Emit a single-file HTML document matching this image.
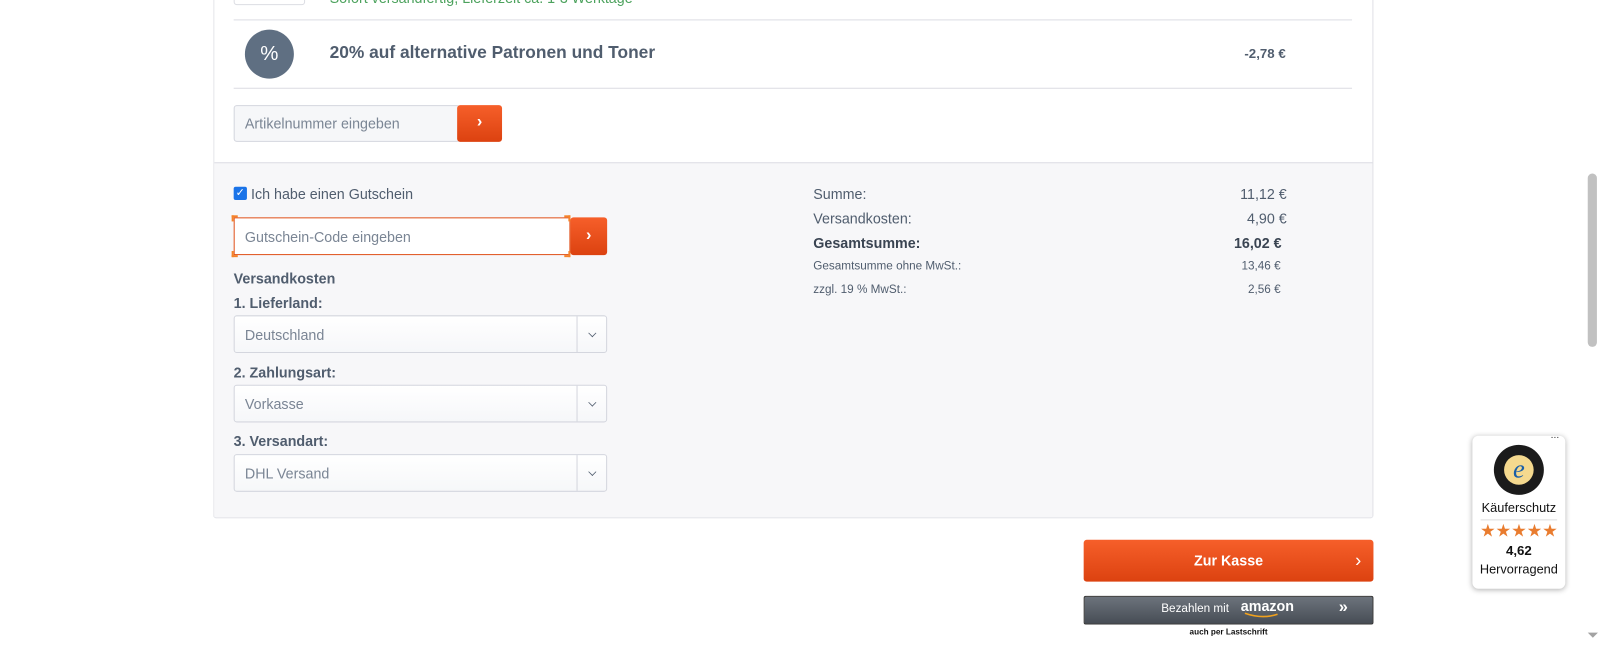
<!DOCTYPE html>
<html><head><meta charset="utf-8"><style>
*{box-sizing:border-box;margin:0;padding:0}
body{width:1600px;height:644px;overflow:hidden;background:#fff;font-family:"Liberation Sans",sans-serif;color:#505d6e;position:relative}
#w{position:absolute;left:0;top:0;width:1568px;height:632px;transform:scale(1.0204);transform-origin:0 0}
.abs{position:absolute}
.panel{left:209px;top:-5px;width:1137px;height:513px;border:1px solid #dcdde3;border-top:none;border-radius:0 0 3px 3px}
.line{height:1px;background:#dcdde3}
.btn{background:linear-gradient(#f65f2a,#dc4210);border-radius:3px;color:#fff;text-align:center;font-weight:bold}
.inp{border:1px solid #d4d6de;border-radius:3px;background:#fff;font-size:14px;color:#7a8594;padding-left:10px;display:flex;align-items:center}
.sel{left:229px;width:366px;height:37px;background:linear-gradient(#fff,#f6f7f9)}
.sel:after{content:"";position:absolute;right:0;top:0;width:28px;height:35px;border-left:1px solid #d4d6de}
.chev{position:absolute;right:10px;top:13px;width:7px;height:7px;border-right:1.5px solid #505d6e;border-bottom:1.5px solid #505d6e;transform:rotate(45deg) scale(.8)}
.lbl{font-size:14px;font-weight:bold;left:229px}
.sum{font-size:14px}
.r{text-align:right;width:200px}
</style></head><body><div id="w">
<div class="abs panel"></div>
<div class="abs" style="left:229px;top:-10px;width:70px;height:15px;border:1px solid #dcdde3;border-radius:3px"></div>
<div class="abs" style="left:323px;top:-10px;font-size:14px;color:#4ca25d">Sofort versandfertig, Lieferzeit ca. 1-3 Werktage</div>
<div class="abs line" style="left:229px;top:19px;width:1096px"></div>
<div class="abs" style="left:240px;top:29px;width:48px;height:48px;border-radius:50%;background:#5f6f82;color:#fff;font-size:20px;text-align:center;line-height:48px">%</div>
<div class="abs" style="left:323px;top:42px;font-size:17px;font-weight:bold">20% auf alternative Patronen und Toner</div>
<div class="abs" style="left:1160px;top:45px;width:100px;text-align:right;font-size:13px;font-weight:bold">-2,78 €</div>
<div class="abs line" style="left:229px;top:86px;width:1096px"></div>
<div class="abs inp" style="left:229px;top:103px;width:222px;height:36px;background:#f6f7f9">Artikelnummer eingeben</div>
<div class="abs btn" style="left:448px;top:103px;width:44px;height:36px;line-height:34px;font-size:16px">›</div>
<div class="abs" style="left:210px;top:159px;width:1135px;height:348px;background:#f7f7f9;border-top:1px solid #dcdde3"></div>
<div class="abs" style="left:229px;top:183px;width:13px;height:13px;background:#1a73e8;border-radius:2px;color:#fff;font-size:11px;line-height:13px;text-align:center">✓</div>
<div class="abs" style="left:246px;top:182px;font-size:14px">Ich habe einen Gutschein</div>
<div class="abs inp" style="left:229px;top:213px;width:330px;height:37px;border:1.5px solid #e0521c;border-radius:0">Gutschein-Code eingeben</div>
<div class="abs" style="left:227px;top:211px;width:6px;height:6px;border-left:2px solid #f5832a;border-top:2px solid #f5832a"></div>
<div class="abs" style="left:553px;top:211px;width:6px;height:6px;border-right:2px solid #f5832a;border-top:2px solid #f5832a"></div>
<div class="abs" style="left:227px;top:246px;width:6px;height:6px;border-left:2px solid #f5832a;border-bottom:2px solid #f5832a"></div>
<div class="abs" style="left:553px;top:246px;width:6px;height:6px;border-right:2px solid #f5832a;border-bottom:2px solid #f5832a"></div>
<div class="abs btn" style="left:559px;top:213px;width:36px;height:37px;line-height:35px;font-size:16px">›</div>
<div class="abs lbl" style="top:265px">Versandkosten</div>
<div class="abs lbl" style="top:289px">1. Lieferland:</div>
<div class="abs inp sel" style="top:309px">Deutschland<span class="chev"></span></div>
<div class="abs lbl" style="top:357px">2. Zahlungsart:</div>
<div class="abs inp sel" style="top:377px">Vorkasse<span class="chev"></span></div>
<div class="abs lbl" style="top:424px">3. Versandart:</div>
<div class="abs inp sel" style="top:445px">DHL Versand<span class="chev"></span></div>

<div class="abs sum" style="left:797px;top:182px">Summe:</div>
<div class="abs sum r" style="left:1061px;top:182px">11,12 €</div>
<div class="abs sum" style="left:797px;top:206px">Versandkosten:</div>
<div class="abs sum r" style="left:1061px;top:206px">4,90 €</div>
<div class="abs sum" style="left:797px;top:230px;font-weight:bold;color:#3a4452">Gesamtsumme:</div>
<div class="abs sum r" style="left:1056px;top:230px;font-weight:bold;color:#3a4452">16,02 €</div>
<div class="abs" style="left:797px;top:255px;font-size:11.5px">Gesamtsumme ohne MwSt.:</div>
<div class="abs r" style="left:1055px;top:255px;font-size:11.5px">13,46 €</div>
<div class="abs" style="left:797px;top:278px;font-size:11.5px">zzgl. 19 % MwSt.:</div>
<div class="abs r" style="left:1055px;top:278px;font-size:11.5px">2,56 €</div>

<div class="abs btn" style="left:1062px;top:529px;width:284px;height:41px;line-height:40px;font-size:14px">Zur Kasse<span style="position:absolute;right:12px;font-size:18px;font-weight:normal">›</span></div>
<div class="abs" style="left:1062px;top:584px;width:284px;height:28px;border-radius:2px;background:linear-gradient(#6c737c,#474d55);border:1px solid #333;color:#fff;font-size:11.5px;line-height:24px">
<span style="position:absolute;left:75px">Bezahlen mit</span><span style="position:absolute;left:153px;top:-3px;font-weight:bold;font-size:14px">amazon</span>
<svg class="abs" style="left:156px;top:15px" width="36" height="6"><path d="M1 1Q18 7 33 2" stroke="#f0a11e" stroke-width="1.6" fill="none"/></svg>
<span style="position:absolute;left:249px;font-weight:bold;font-size:16px;top:-1px">»</span></div>
<div class="abs" style="left:1062px;top:615px;width:284px;text-align:center;font-size:8px;font-weight:bold;color:#111">auch per Lastschrift</div>

<div class="abs" style="left:1443px;top:427px;width:91px;height:150px;background:#fff;border-radius:6px;box-shadow:0 1px 5px rgba(0,0,0,.3)">
<div class="abs" style="right:6px;top:-6px;font-size:10px;color:#333">...</div>
<div class="abs" style="left:21px;top:9px;width:49px;height:49px;border-radius:50%;background:#1b1b1b"><div class="abs" style="left:10px;top:10px;width:29px;height:29px;border-radius:50%;background:#f5d98e;color:#1a5fa8;font-size:26px;font-style:italic;font-family:'Liberation Serif',serif;text-align:center;line-height:28px">e</div></div>
<div class="abs" style="width:91px;top:64px;text-align:center;font-size:12.5px;color:#111">Käuferschutz</div>
<div class="abs" style="left:8px;top:82px;width:75px;height:1px;background:#ddd"></div>
<div class="abs" style="width:91px;top:84px;text-align:center;font-size:17px;color:#e97c2f;letter-spacing:0">★★★★★</div>
<div class="abs" style="width:91px;top:105px;text-align:center;font-size:13px;font-weight:bold;color:#111">4,62</div>
<div class="abs" style="width:91px;top:124px;text-align:center;font-size:12.5px;color:#111">Hervorragend</div>
</div>
<div class="abs" style="left:1553px;top:0;width:15px;height:644px;background:#fff"></div>
<div class="abs" style="left:1556px;top:170px;width:9px;height:170px;background:#c1c1c1;border-radius:5px"></div>
<div class="abs" style="left:1556px;top:620px;width:0;height:0;border-left:5px solid transparent;border-right:5px solid transparent;border-top:5px solid #a3a3a3"></div>
</div></body></html>
